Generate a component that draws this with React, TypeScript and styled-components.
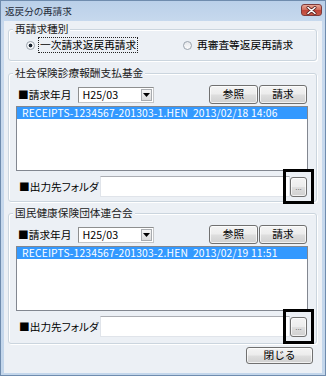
import React from "react";
import styled, { createGlobalStyle } from "styled-components";

const FONT = `"Noto Sans CJK JP", "Noto Sans", sans-serif`;

const Global = createGlobalStyle`
  html, body { margin: 0; padding: 0; background: #ffffff; }
  body { font-family: ${FONT}; }
  #root { width: 326px; height: 376px; }
  * { box-sizing: border-box; }
`;

const Window = styled.div`
  width: 326px;
  height: 376px;
  border: 1px solid #6f8cae;
  background: linear-gradient(#bad0e9, #c9daee 24px, #c3d6eb);
  padding: 0 3px 2px 3px;
  display: flex;
  flex-direction: column;
  font-family: ${FONT};
  font-size: 10.7px;
  color: #000;
`;

const TitleBar = styled.div`
  height: 20px;
  display: flex;
  align-items: flex-start;
  justify-content: space-between;
  padding-left: 1px;
`;

const Title = styled.span`
  font-size: 9.6px;
  line-height: 20px;
  color: #1e2a38;
  font-feature-settings: "palt";
`;

const CloseBox = styled.div`
  margin-top: 3px;
  width: 21px;
  height: 12px;
  border: 1px solid #7e3b3b;
  border-radius: 3px;
  background: linear-gradient(#e8a898 0%, #d0705f 45%, #c0453a 55%, #c95a48 100%);
  display: flex;
  align-items: center;
  justify-content: center;
`;

const Client = styled.div`
  flex: 1;
  background: #ecf0f5;
  display: flex;
  flex-direction: column;
  padding: 1px 5px 0 4px;
`;

const Group = styled.fieldset<{ $mt?: number }>`
  margin: ${(p) => p.$mt ?? 0}px 0 0 0;
  padding: 0;
  border: 1px solid #cbd5de;
  border-radius: 3px;
  box-shadow: inset 1px 1px 0 #ffffff, 1px 1px 0 #ffffff;
  min-width: 0;
`;

const Legend = styled.legend`
  margin-left: 4px;
  padding: 0 2px;
  line-height: 14px;
  background: #ecf0f5;
  font-size: 10.7px;
  color: #1a1a1a;
`;

const GroupBody = styled.div<{ $pt?: number; $pb?: number }>`
  padding: ${(p) => p.$pt ?? 0}px 8px ${(p) => p.$pb ?? 0}px 7px;
  display: flex;
  flex-direction: column;
`;

const RadioRow = styled.div`
  display: grid;
  grid-template-columns: 157px 1fr;
  padding-left: 10px;
  height: 16px;
  align-items: center;
`;

const RadioOption = styled.label`
  display: flex;
  align-items: center;
  gap: 3px;
`;

const RadioCircle = styled.span<{ $checked?: boolean }>`
  width: 9px;
  height: 9px;
  border-radius: 50%;
  border: 1px solid #9aa3ad;
  background: ${(p) =>
    p.$checked
      ? "radial-gradient(circle, #1b2430 0 1.6px, #f4f6f8 2.2px)"
      : "linear-gradient(#e6e8eb, #fbfbfc)"};
  flex: none;
`;

const RadioText = styled.span<{ $focus?: boolean }>`
  border: 1px ${(p) => (p.$focus ? "dotted #222" : "solid transparent")};
  padding: 0 1px;
  line-height: 14px;
  white-space: nowrap;
`;

const YearRow = styled.div`
  display: flex;
  align-items: center;
  height: 19px;
  margin-top: 5px;
  padding: 0 1px 0 2px;
`;

const FieldLabel = styled.span<{ $w?: number }>`
  white-space: nowrap;
  font-feature-settings: "palt";
  ${(p) => (p.$w ? `width: ${p.$w}px; flex: none;` : "")}
`;

const Combo = styled.div`
  margin-left: 7px;
  width: 76px;
  height: 16px;
  border: 1px solid #8e8f8f;
  border-right-color: #c4c6c8;
  border-bottom-color: #c4c6c8;
  background: #fff;
  display: flex;
  align-items: center;
  padding: 0 1px 0 3px;
`;

const ComboText = styled.span`
  flex: 1;
  font-size: 10.7px;
  line-height: 14px;
`;

const ComboArrow = styled.span`
  width: 11px;
  height: 12px;
  border: 1px solid #a9acb0;
  background: linear-gradient(#f5f5f5, #dcdcdc);
  display: flex;
  align-items: center;
  justify-content: center;
`;

const ButtonGroup = styled.div`
  margin-left: auto;
  display: flex;
  gap: 1px;
`;

const Button = styled.button<{ $w: number; $h: number }>`
  width: ${(p) => p.$w}px;
  height: ${(p) => p.$h}px;
  border: 1px solid #707070;
  border-radius: 3px;
  background: linear-gradient(#f4f4f4 0%, #ececec 48%, #dedede 52%, #d0d0d0 100%);
  box-shadow: inset 0 0 0 1px rgba(255, 255, 255, 0.7);
  font-family: ${FONT};
  font-size: 10.7px;
  color: #000;
  padding: 0;
  display: flex;
  align-items: center;
  justify-content: center;
  line-height: 1;
`;

const ListBox = styled.div<{ $h: number }>`
  margin-top: 2px;
  height: ${(p) => p.$h}px;
  border: 1px solid #828790;
  background: #fff;
  padding: 0;
`;

const ListItem = styled.div<{ $selected?: boolean }>`
  height: 12px;
  line-height: 12px;
  padding-left: 5px;
  background: ${(p) => (p.$selected ? "#3399ff" : "transparent")};
  color: ${(p) => (p.$selected ? "#fff" : "#000")};
  font-size: 10.3px;
  letter-spacing: 0.17px;
  white-space: pre;
`;

const FolderRow = styled.div`
  display: flex;
  align-items: center;
  height: 21px;
  margin-top: 5px;
  padding: 0 1px 0 3px;
`;

const TextField = styled.div`
  flex: 1;
  height: 21px;
  border: 1px solid #e0e4ea;
  border-top-color: #abadb3;
  background: #fff;
`;

const Marked = styled.div`
  position: relative;
  display: flex;
  &::after {
    content: "";
    position: absolute;
    top: -8px;
    left: -7px;
    right: -7px;
    bottom: -7px;
    border: 3px solid #000;
    pointer-events: none;
  }
`;

const Dots = styled.span`
  font-family: "Liberation Sans", sans-serif;
  font-size: 8px;
  color: #555;
  margin-top: 2px;
`;

const Footer = styled.div`
  margin-top: 3px;
  display: flex;
  justify-content: flex-end;
  padding-right: 4px;
`;

const CloseIcon = () => (
  <svg width="11" height="9" viewBox="0 0 11 9">
    <path d="M2 1.5 L9 7.5 M9 1.5 L2 7.5" stroke="#5a2222" strokeWidth="3" strokeLinecap="round" />
    <path d="M2 1.5 L9 7.5 M9 1.5 L2 7.5" stroke="#ffffff" strokeWidth="1.6" strokeLinecap="round" />
  </svg>
);

const ArrowIcon = () => (
  <svg width="7" height="4" viewBox="0 0 7 4">
    <path d="M0 0 H7 L3.5 4 Z" fill="#000" />
  </svg>
);

type SectionProps = {
  title: string;
  item: string;
  mt: number;
  pb: number;
};

const Section = ({ title, item, mt, pb }: SectionProps) => (
  <Group $mt={mt}>
    <Legend>{title}</Legend>
    <GroupBody $pb={pb}>
      <YearRow>
        <FieldLabel>■請求年月</FieldLabel>
        <Combo>
          <ComboText>H25/03</ComboText>
          <ComboArrow>
            <ArrowIcon />
          </ComboArrow>
        </Combo>
        <ButtonGroup>
          <Button $w={49} $h={19}>参照</Button>
          <Button $w={48} $h={19}>請求</Button>
        </ButtonGroup>
      </YearRow>
      <ListBox $h={65}>
        <ListItem $selected>{item}</ListItem>
      </ListBox>
      <FolderRow>
        <FieldLabel $w={81}>■出力先フォルダ</FieldLabel>
        <TextField />
        <Marked>
          <Button $w={17} $h={20}>
            <Dots>...</Dots>
          </Button>
        </Marked>
      </FolderRow>
    </GroupBody>
  </Group>
);

export default function App() {
  return (
    <>
      <Global />
      <Window>
        <TitleBar>
          <Title>返戻分の再請求</Title>
          <CloseBox>
            <CloseIcon />
          </CloseBox>
        </TitleBar>
        <Client>
          <Group>
            <Legend>再請求種別</Legend>
            <GroupBody $pt={1} $pb={7}>
              <RadioRow>
                <RadioOption>
                  <RadioCircle $checked />
                  <RadioText $focus>一次請求返戻再請求</RadioText>
                </RadioOption>
                <RadioOption>
                  <RadioCircle />
                  <RadioText>再審査等返戻再請求</RadioText>
                </RadioOption>
              </RadioRow>
            </GroupBody>
          </Group>
          <Section
            title="社会保険診療報酬支払基金"
            item="RECEIPTS-1234567-201303-1.HEN  2013/02/18 14:06"
            mt={5}
            pb={4}
          />
          <Section
            title="国民健康保険団体連合会"
            item="RECEIPTS-1234567-201303-2.HEN  2013/02/19 11:51"
            mt={4}
            pb={6}
          />
          <Footer>
            <Button $w={67} $h={17}>閉じる</Button>
          </Footer>
        </Client>
      </Window>
    </>
  );
}
